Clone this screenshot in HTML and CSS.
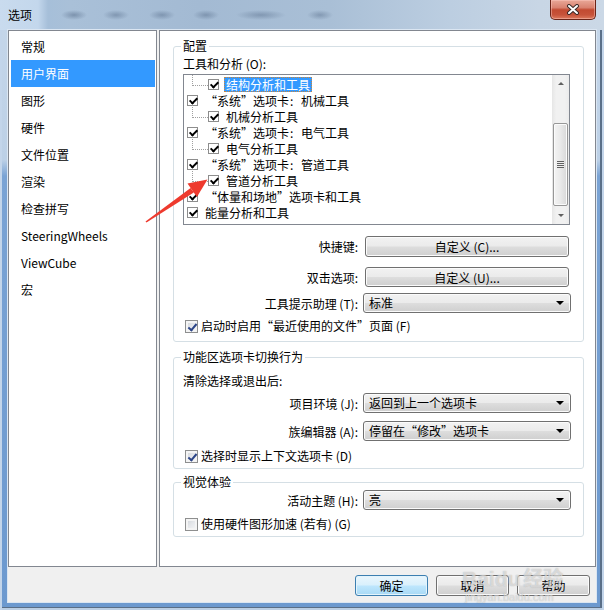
FILE: index.html
```html
<!DOCTYPE html>
<html lang="zh-CN">
<head>
<meta charset="utf-8">
<title>选项</title>
<link rel="stylesheet" href="styles.css">
</head>
<body>
<div class="window">
  <div class="titlebar">
    <span class="title">选项</span>
    <div class="close">
      <svg width="14" height="11" viewBox="0 0 14 11"><path d="M3 2 L11 9 M11 2 L3 9" stroke="#3a2a28" stroke-width="4" stroke-linecap="round"/><path d="M3 2 L11 9 M11 2 L3 9" stroke="#fff" stroke-width="2" stroke-linecap="round"/></svg>
    </div>
  </div>
  <div class="client">
    <div class="panes">
      <ul class="nav">
        <li>常规</li>
        <li class="sel">用户界面</li>
        <li>图形</li>
        <li>硬件</li>
        <li>文件位置</li>
        <li>渲染</li>
        <li>检查拼写</li>
        <li>SteeringWheels</li>
        <li>ViewCube</li>
        <li>宏</li>
      </ul>
      <div class="content">
        <fieldset class="group g1">
          <legend>配置</legend>
          <div class="flabel">工具和分析 (O):</div>
          <div class="tree">
            <div class="tlist">
              <div class="trow child first"><span class="tcb"></span><span class="tlabel sel">结构分析和工具</span></div>
              <div class="trow"><span class="tcb"></span><span class="tlabel"><span class="ql">“</span>系统<span class="qr">”</span>选项卡<span class="colon">:</span>机械工具</span></div>
              <div class="trow child"><span class="tcb"></span><span class="tlabel">机械分析工具</span></div>
              <div class="trow"><span class="tcb"></span><span class="tlabel"><span class="ql">“</span>系统<span class="qr">”</span>选项卡<span class="colon">:</span>电气工具</span></div>
              <div class="trow child"><span class="tcb"></span><span class="tlabel">电气分析工具</span></div>
              <div class="trow"><span class="tcb"></span><span class="tlabel"><span class="ql">“</span>系统<span class="qr">”</span>选项卡<span class="colon">:</span>管道工具</span></div>
              <div class="trow child"><span class="tcb"></span><span class="tlabel">管道分析工具</span></div>
              <div class="trow"><span class="tcb"></span><span class="tlabel"><span class="ql">“</span>体量和场地<span class="qr">”</span>选项卡和工具</span></div>
              <div class="trow"><span class="tcb"></span><span class="tlabel">能量分析和工具</span></div>
            </div>
            <div class="sbar">
              <div class="sarrow up"></div>
              <div class="strack"><div class="sthumb"><i></i></div></div>
              <div class="sarrow down"></div>
            </div>
          </div>
          <div class="row r-short"><span class="rlabel">快捷键:</span><button class="btn wide">自定义 (C)...</button></div>
          <div class="row r-dbl"><span class="rlabel">双击选项:</span><button class="btn wide">自定义 (U)...</button></div>
          <div class="row r-tip"><span class="rlabel">工具提示助理 (T):</span><div class="combo">标准</div></div>
          <div class="check r-recent"><span class="cb on"></span><span>启动时启用<span class="ql">“</span>最近使用的文件<span class="qr">”</span>页面 (F)</span></div>
        </fieldset>
        <fieldset class="group g2">
          <legend>功能区选项卡切换行为</legend>
          <div class="flabel clear">清除选择或退出后:</div>
          <div class="row r-proj"><span class="rlabel">项目环境 (J):</span><div class="combo">返回到上一个选项卡</div></div>
          <div class="row r-fam"><span class="rlabel">族编辑器 (A):</span><div class="combo">停留在<span class="ql">“</span>修改<span class="qr">”</span>选项卡</div></div>
          <div class="check r-ctx"><span class="cb on"></span><span>选择时显示上下文选项卡 (D)</span></div>
        </fieldset>
        <fieldset class="group g3">
          <legend>视觉体验</legend>
          <div class="row r-theme"><span class="rlabel">活动主题 (H):</span><div class="combo">亮</div></div>
          <div class="check r-hw"><span class="cb"></span><span>使用硬件图形加速 (若有) (G)</span></div>
        </fieldset>
      </div>
    </div>
    <div class="footer">
      <button class="btn foot default">确定</button>
      <button class="btn foot">取消</button>
      <button class="btn foot">帮助</button>
    </div>
  </div>
  <svg class="arrow" width="80" height="60" viewBox="140 170 80 60">
    <polygon points="145.5,221.4 146.5,222.6 193.8,192.4 190.6,188.0" fill="#ee3a2e"/>
    <polygon points="207.5,179.5 187.5,183.4 196.9,197.0" fill="#ee3a2e"/>
  </svg>
  <div class="watermark">
    <div class="wm-logo">Baidu<span class="wm-cn">经验</span></div>
    <div class="wm-url">jingyan.baidu.com</div>
  </div>
</div>
</body>
</html>
```

FILE: styles.css
```css
* { box-sizing: border-box; }
html, body { margin: 0; padding: 0; }
body {
  font-family: "Noto Sans CJK SC", "Noto Sans", sans-serif;
  font-size: 12px;
  color: #000;
  background: #fff;
}

.ql, .qr { display: inline-block; width: 12px; }
.ql { text-align: right; }
.qr { text-align: left; }
.colon { display: inline-block; width: 12px; padding-left: 1px; }

.window {
  position: relative;
  width: 604px;
  height: 610px;
  display: flex;
  flex-direction: column;
  overflow: hidden;
  background: linear-gradient(180deg, #c6d7ea 0, #bcd0e6 160px, #7aa3d4 176px, #6c99cf 100%);
  box-shadow: inset 2px 0 0 #c3d5ea, inset -2px 0 0 #c3d5ea, inset 0 -2px 0 #bccfe4, inset -1px 0 0 3px #5a6f88;
}

/* title bar */
.titlebar {
  flex: none;
  height: 30px;
  display: flex;
  align-items: flex-start;
  background:
    radial-gradient(ellipse 13px 5px at 74px 15px, rgba(70, 92, 122, .45), transparent),
    radial-gradient(ellipse 13px 5px at 116px 15px, rgba(70, 92, 122, .40), transparent),
    radial-gradient(ellipse 13px 5px at 162px 15px, rgba(70, 92, 122, .40), transparent),
    radial-gradient(ellipse 13px 5px at 206px 15px, rgba(70, 92, 122, .40), transparent),
    radial-gradient(ellipse 25px 5px at 261px 15px, rgba(70, 92, 122, .38), transparent),
    radial-gradient(ellipse 13px 5px at 320px 15px, rgba(70, 92, 122, .38), transparent),
    linear-gradient(90deg, #c9dbee 0, #c3d7ec 38px, #a6bfd9 48px, #a9c0d8 70px, #a3bad3 200px, #a9bfd6 330px, #bccee1 450px, #c8d6e5 540px, #cbd8e6 100%);
}
.title {
  margin: 7px 0 0 8px;
  line-height: 16px;
  font-size: 12px;
}
.close {
  margin: 0 8px 0 auto;
  width: 46px;
  height: 20px;
  border: 1px solid #6a2418;
  border-top: none;
  border-radius: 0 0 5px 5px;
  background: linear-gradient(180deg, #e9a898 0, #d98270 40%, #c24a31 52%, #c7533a 78%, #dd7a5e 100%);
  box-shadow: inset 0 0 0 1px rgba(255, 205, 195, .45);
  display: flex;
  align-items: center;
  justify-content: center;
}

/* client area */
.client {
  flex: none;
  margin: 0 8px;
  height: 572px;
  background: #f0f0f0;
  display: flex;
  flex-direction: column;
  box-shadow: 0 0 0 1px #dbe6f2;
}
.panes {
  flex: none;
  height: 537px;
  display: flex;
  gap: 2px;
}

.nav {
  list-style: none;
  margin: 0;
  width: 149px;
  flex: none;
  border: 1px solid #828790;
  background: #fff;
  padding: 2px 1px 0 2px;
}
.nav li {
  height: 27px;
  line-height: 27px;
  padding-left: 10px;
  font-size: 12px;
  white-space: nowrap;
}
.nav li.sel {
  background: #3399ff;
  color: #fff;
}

.content {
  flex: 1;
  border: 1px solid #828790;
  background: #fff;
  padding: 8px 11px 0 13px;
}

.group {
  margin: 0;
  padding: 0 12px 0 9px;
  border: 1px solid #d5dfe5;
  border-radius: 3px;
  min-width: 0;
}
.group legend {
  padding: 0 2px;
  margin-left: -2px;
  line-height: 14px;
  font-size: 12px;
}
.g1 { padding-bottom: 7px; }
.g2 { margin-top: 8px; padding-bottom: 4px; }
.g3 { margin-top: 6px; padding-bottom: 4px; }

.flabel {
  margin-top: 3px;
  line-height: 16px;
}
.flabel.clear { margin-top: 9px; }

/* tree */
.tree {
  margin: 2px 1px 0 0;
  height: 151px;
  border: 1px solid #828790;
  display: flex;
}
.tlist {
  flex: 1;
  padding-top: 1px;
  overflow: hidden;
}
.trow {
  position: relative;
  height: 16px;
  display: flex;
  align-items: center;
  padding-left: 3px;
  white-space: nowrap;
}
.trow.child { padding-left: 24px; }
.trow.child::before {
  content: "";
  position: absolute;
  left: 8px;
  top: -3px;
  width: 15px;
  height: 12px;
  border-left: 1px dotted #a0a0a0;
  border-bottom: 1px dotted #a0a0a0;
}
.tcb {
  position: relative;
  flex: none;
  width: 11px;
  height: 11px;
  border: 1px solid #8d8d8d;
  background: #fff;
  margin-right: 5px;
}
.tcb::after {
  content: "";
  position: absolute;
  left: 3px;
  top: 0;
  width: 3px;
  height: 6px;
  border: solid #000;
  border-width: 0 2px 2px 0;
  transform: rotate(45deg);
}
.tlabel {
  padding: 0 2px;
  line-height: 15px;
}
.tlabel.sel {
  background: #3399ff;
  color: #fff;
  outline: 1px dotted #c9853c;
  outline-offset: -1px;
}

.sbar {
  width: 17px;
  flex: none;
  display: flex;
  flex-direction: column;
  background: linear-gradient(90deg, #e6e6e6 0, #f1f1f1 25%, #f1f1f1 75%, #ebebeb 100%);
}
.sarrow {
  height: 17px;
  flex: none;
  display: flex;
  align-items: center;
  justify-content: center;
}
.sarrow.up::before {
  content: "";
  border-left: 3px solid transparent;
  border-right: 3px solid transparent;
  border-bottom: 3px solid #606060;
}
.sarrow.down::before {
  content: "";
  border-left: 3px solid transparent;
  border-right: 3px solid transparent;
  border-top: 3px solid #606060;
}
.strack { flex: 1; }
.sthumb {
  margin: 31px 0 0 1px;
  width: 15px;
  height: 83px;
  border: 1px solid #979797;
  border-radius: 2px;
  background: linear-gradient(90deg, #f4f4f4 0, #e9e9e9 50%, #d8d8d8 100%);
  box-shadow: inset 0 0 0 1px #fbfbfb;
  display: flex;
  align-items: center;
  justify-content: center;
}
.sthumb i {
  width: 7px;
  height: 7px;
  background: repeating-linear-gradient(180deg, #606060 0 1px, #eeeeee 1px 2px);
}

/* labelled rows */
.row {
  display: grid;
  grid-template-columns: 1fr 208px;
  column-gap: 5px;
  align-items: center;
}
.rlabel {
  text-align: right;
  white-space: nowrap;
}
.r-short { margin-top: 11px; }
.r-dbl { margin-top: 10px; }
.r-tip { margin-top: 6px; }
.r-proj { margin-top: 4px; }
.r-fam { margin-top: 8px; }
.r-theme { margin-top: 1px; }

.btn {
  font-family: inherit;
  font-size: 12px;
  color: #000;
  padding: 0;
  border: 1px solid #707070;
  border-radius: 3px;
  background: linear-gradient(180deg, #f2f2f2 0, #ebebeb 48%, #dddddd 52%, #cfcfcf 100%);
  box-shadow: inset 0 0 0 1px #fbfbfb;
}
.btn.wide {
  width: 204px;
  height: 21px;
  justify-self: center;
}
.r-dbl .btn.wide { height: 20px; }

.combo {
  position: relative;
  height: 20px;
  line-height: 18px;
  padding-left: 5px;
  border: 1px solid #707070;
  border-radius: 3px;
  background: linear-gradient(180deg, #f2f2f2 0, #ebebeb 48%, #dddddd 52%, #cfcfcf 100%);
  box-shadow: inset 0 0 0 1px #fbfbfb;
  white-space: nowrap;
}
.combo::after {
  content: "";
  position: absolute;
  right: 6px;
  top: 7px;
  border-left: 4px solid transparent;
  border-right: 4px solid transparent;
  border-top: 4px solid #000;
}

/* checkboxes */
.check {
  display: flex;
  align-items: center;
  line-height: 16px;
  padding-left: 2px;
  gap: 3px;
  white-space: nowrap;
}
.r-recent { margin-top: 5px; }
.r-ctx { margin-top: 7px; }
.r-hw { margin-top: 6px; }
.cb {
  position: relative;
  flex: none;
  width: 13px;
  height: 13px;
  border: 1px solid #8e8f8f;
  background: linear-gradient(135deg, #cdd1d7 0, #e6e8eb 50%, #f7f8f9 100%);
  box-shadow: inset 0 0 0 2px #f4f4f4;
}
.cb.on::after {
  content: "";
  position: absolute;
  left: 4px;
  top: 1px;
  width: 3px;
  height: 7px;
  border: solid #2c4587;
  border-width: 0 2px 2px 0;
  transform: rotate(40deg);
}

/* footer */
.footer {
  flex: 1;
  display: flex;
  justify-content: flex-end;
  align-items: flex-start;
  gap: 8px;
  padding: 8px 6px 0 0;
}
.btn.foot {
  width: 73px;
  height: 21px;
}
.btn.default {
  border-color: #3c7fb1;
  background: linear-gradient(180deg, #eaf6fd 0, #d9f0fc 48%, #bee6fd 52%, #a7d9f5 100%);
  box-shadow: inset 0 0 0 1px #e3f4fc;
}

/* overlays */
.arrow {
  position: absolute;
  left: 140px;
  top: 170px;
  pointer-events: none;
}
.watermark {
  position: absolute;
  left: 462px;
  top: 566px;
  pointer-events: none;
  color: rgba(255, 255, 255, .55);
  text-shadow: 0 0 1px rgba(110, 110, 110, .55);
}
.wm-logo {
  font-family: "Liberation Sans", sans-serif;
  font-weight: bold;
  font-size: 21px;
  line-height: 24px;
}
.wm-cn {
  font-family: "Noto Sans CJK SC", sans-serif;
  font-size: 20px;
  margin-left: 3px;
}
.wm-url {
  font-family: "Liberation Sans", sans-serif;
  font-size: 11px;
  line-height: 12px;
  margin-left: 3px;
}
```
